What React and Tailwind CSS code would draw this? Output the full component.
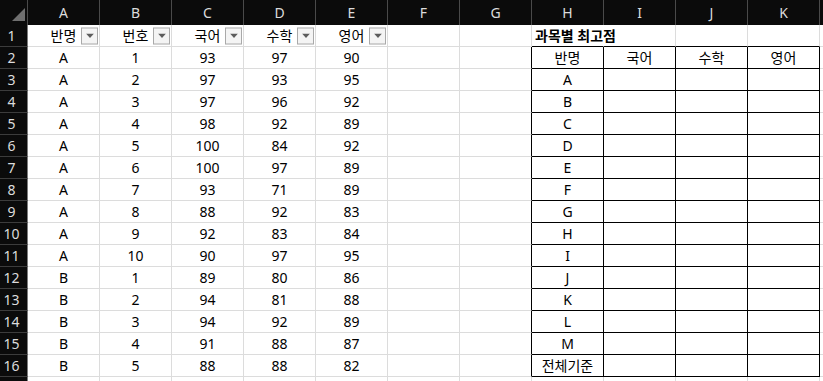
import React from "react";

const COLS = ["A", "B", "C", "D", "E", "F", "G", "H", "I", "J", "K"];

const DATA = [
  ["A", 1, 93, 97, 90],
  ["A", 2, 97, 93, 95],
  ["A", 3, 97, 96, 92],
  ["A", 4, 98, 92, 89],
  ["A", 5, 100, 84, 92],
  ["A", 6, 100, 97, 89],
  ["A", 7, 93, 71, 89],
  ["A", 8, 88, 92, 83],
  ["A", 9, 92, 83, 84],
  ["A", 10, 90, 97, 95],
  ["B", 1, 89, 80, 86],
  ["B", 2, 94, 81, 88],
  ["B", 3, 94, 92, 89],
  ["B", 4, 91, 88, 87],
  ["B", 5, 88, 88, 82],
];

const SUMMARY = ["A", "B", "C", "D", "E", "F", "G", "H", "I", "J", "K", "L", "M", "전체기준"];

function FilterButton() {
  return (
    <span className="absolute right-[1px] top-1/2 -translate-y-1/2 w-[17px] h-[17px] border border-[#a9a9a9] bg-[#f4f4f4] flex items-center justify-center">
      <svg width="8" height="5" viewBox="0 0 8 5">
        <path d="M0 0 H8 L4 4.5 Z" fill="#5c5c5c" />
      </svg>
    </span>
  );
}

function RowHeader({ n }) {
  return (
    <div className="w-[28px] shrink-0 bg-[#0b0b0b] border-r border-[#7c7c7c] border-b border-b-[#3c3c3c] flex items-center justify-center pr-[4px] text-[#dcdcdc]">
      {n}
    </div>
  );
}

function Cell({ children, className = "" }) {
  return (
    <div
      className={
        "relative w-[72px] shrink-0 border-r border-b border-[#dcdcdc] flex items-center justify-center " +
        className
      }
    >
      {children}
    </div>
  );
}

export default function App() {
  return (
    <div
      className="w-[823px] h-[381px] overflow-hidden bg-white text-[14px] text-black leading-none"
      style={{ fontFamily: '"Noto Sans", "Noto Sans CJK KR", sans-serif' }}
    >
      {/* column headers */}
      <div className="flex h-[25px] bg-[#0b0b0b] text-[#dcdcdc]">
        <div className="relative w-[28px] shrink-0 border-r border-[#4a4a4a]">
          <svg className="absolute left-[12px] top-[8px]" width="13" height="13" viewBox="0 0 13 13">
            <path d="M13 0 V13 H0 Z" fill="#6f6f6f" />
          </svg>
        </div>
        {COLS.map((c) => (
          <div
            key={c}
            className="w-[72px] shrink-0 border-r border-[#4a4a4a] flex items-center justify-center"
          >
            {c}
          </div>
        ))}
        <div className="flex-1" />
      </div>

      {/* row 1 */}
      <div className="flex h-[22px]">
        <RowHeader n={1} />
        {["반명", "번호", "국어", "수학", "영어"].map((h) => (
          <Cell key={h}>
            {h}
            <FilterButton />
          </Cell>
        ))}
        <Cell />
        <Cell />
        <Cell className="justify-start pl-[3px] border-r-transparent border-b-black whitespace-nowrap font-bold z-10">
          과목별 최고점
        </Cell>
        <Cell className="border-b-black" />
        <Cell className="border-b-black" />
        <Cell className="border-b-black" />
        <div className="flex-1 border-b border-[#dcdcdc]" />
      </div>

      {/* rows 2-16 */}
      {DATA.map((r, i) => {
        const h = i === 0 ? "반명" : SUMMARY[i - 1];
        const heads = ["국어", "수학", "영어"];
        return (
          <div key={i} className="flex h-[22px]">
            <RowHeader n={i + 2} />
            {r.map((v, j) => (
              <Cell key={j}>{v}</Cell>
            ))}
            <Cell />
            <Cell className="border-r-black" />
            <Cell className="border-r-black border-b-black">{h}</Cell>
            {heads.map((t) => (
              <Cell key={t} className="border-r-black border-b-black">
                {i === 0 ? t : ""}
              </Cell>
            ))}
            <div className="flex-1 border-b border-[#dcdcdc]" />
          </div>
        );
      })}

      {/* row 17, only its top edge shows */}
      <div className="flex h-[22px]">
        <RowHeader n="" />
        {COLS.map((c) => (
          <Cell key={c} />
        ))}
      </div>
    </div>
  );
}
